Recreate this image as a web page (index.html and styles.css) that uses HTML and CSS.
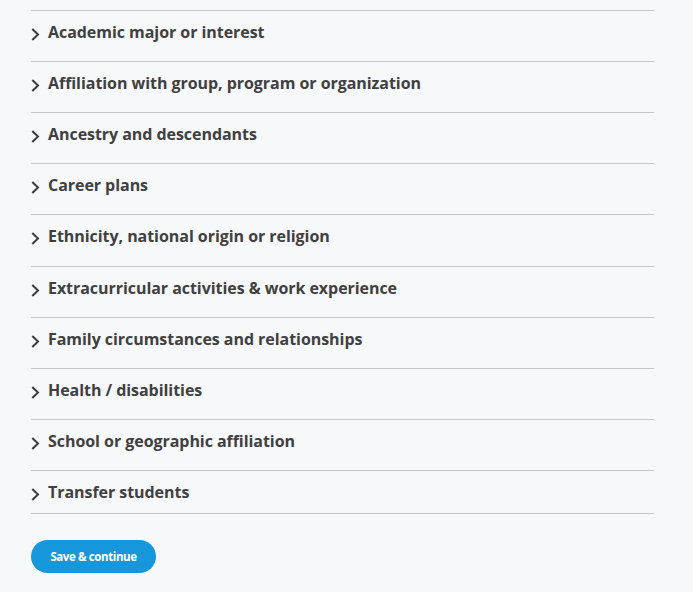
FILE: index.html
```html
<!DOCTYPE html>
<html>
<head>
<meta charset="utf-8">
<link rel="stylesheet" href="styles.css">
</head>
<body>
<div class="page">
  <ul class="list">
    <li class="row"><span class="chev"><svg width="10" height="13" viewBox="0 0 10 13"><path d="M1.3 1 L7 6.5 L1.3 12" fill="none" stroke="#3d3d3d" stroke-width="2"/></svg></span>Academic major or interest</li>
    <li class="row"><span class="chev"><svg width="10" height="13" viewBox="0 0 10 13"><path d="M1.3 1 L7 6.5 L1.3 12" fill="none" stroke="#3d3d3d" stroke-width="2"/></svg></span>Affiliation with group, program or organization</li>
    <li class="row"><span class="chev"><svg width="10" height="13" viewBox="0 0 10 13"><path d="M1.3 1 L7 6.5 L1.3 12" fill="none" stroke="#3d3d3d" stroke-width="2"/></svg></span>Ancestry and descendants</li>
    <li class="row"><span class="chev"><svg width="10" height="13" viewBox="0 0 10 13"><path d="M1.3 1 L7 6.5 L1.3 12" fill="none" stroke="#3d3d3d" stroke-width="2"/></svg></span>Career plans</li>
    <li class="row"><span class="chev"><svg width="10" height="13" viewBox="0 0 10 13"><path d="M1.3 1 L7 6.5 L1.3 12" fill="none" stroke="#3d3d3d" stroke-width="2"/></svg></span>Ethnicity, national origin or religion</li>
    <li class="row"><span class="chev"><svg width="10" height="13" viewBox="0 0 10 13"><path d="M1.3 1 L7 6.5 L1.3 12" fill="none" stroke="#3d3d3d" stroke-width="2"/></svg></span>Extracurricular activities &amp; work experience</li>
    <li class="row"><span class="chev"><svg width="10" height="13" viewBox="0 0 10 13"><path d="M1.3 1 L7 6.5 L1.3 12" fill="none" stroke="#3d3d3d" stroke-width="2"/></svg></span>Family circumstances and relationships</li>
    <li class="row"><span class="chev"><svg width="10" height="13" viewBox="0 0 10 13"><path d="M1.3 1 L7 6.5 L1.3 12" fill="none" stroke="#3d3d3d" stroke-width="2"/></svg></span>Health / disabilities</li>
    <li class="row"><span class="chev"><svg width="10" height="13" viewBox="0 0 10 13"><path d="M1.3 1 L7 6.5 L1.3 12" fill="none" stroke="#3d3d3d" stroke-width="2"/></svg></span>School or geographic affiliation</li>
    <li class="row"><span class="chev"><svg width="10" height="13" viewBox="0 0 10 13"><path d="M1.3 1 L7 6.5 L1.3 12" fill="none" stroke="#3d3d3d" stroke-width="2"/></svg></span>Transfer students</li>
  </ul>
  <button class="btn">Save &amp; continue</button>
</div>
</body>
</html>
```
FILE: styles.css
```css
html, body {
  margin: 0;
  padding: 0;
  background: #f7f8fa;
}
.page {
  padding: 10px 0 0 31px;
  width: 623px;
  font-family: "Open Sans", "Liberation Sans", sans-serif;
}
.list {
  list-style: none;
  margin: 0;
  padding: 0;
}
.row {
  box-sizing: border-box;
  height: 51.11px;
  border-top: 1px solid #c6c6c8;
  display: flex;
  align-items: flex-start;
  padding-top: 10px;
  font-size: 16px;
  font-weight: 700;
  color: #404040;
  line-height: 22px;
  letter-spacing: -0.05px;
}
.row:last-child {
  height: 44px;
  border-bottom: 1px solid #c6c6c8;
}
.chev {
  width: 17px;
  display: flex;
  padding-top: 7px;
}
.btn {
  margin-top: 26px;
  width: 125px;
  height: 33px;
  border: none;
  border-radius: 17px;
  background: #1797db;
  color: #fff;
  font-family: "Open Sans", "Liberation Sans", sans-serif;
  font-weight: 700;
  font-size: 11.5px;
  letter-spacing: -0.4px;
  padding: 0;
}
```
